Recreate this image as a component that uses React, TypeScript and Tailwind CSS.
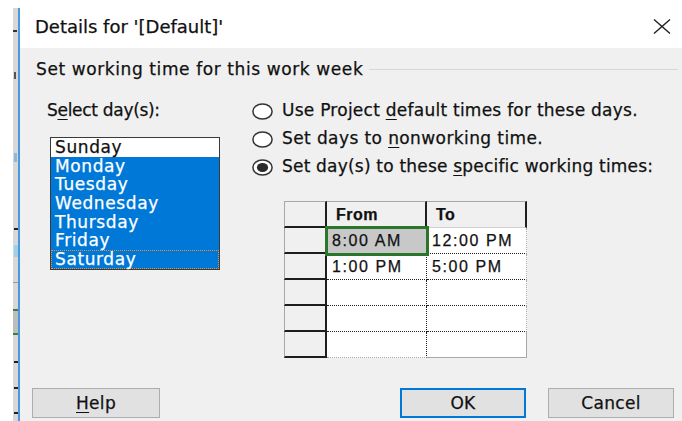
import React from "react";

const DAYS = ["Sunday", "Monday", "Tuesday", "Wednesday", "Thursday", "Friday", "Saturday"];

function Radio({ checked }: { checked?: boolean }) {
  return (
    <svg width="21" height="17" viewBox="0 0 21 17" className="shrink-0">
      <ellipse cx="10.5" cy="8.5" rx="9.6" ry="7.6" fill="#fff" stroke="#333" strokeWidth="1.5" />
      {checked && <ellipse cx="10.5" cy="8.5" rx="5.6" ry="4.5" fill="#2b2b2b" />}
    </svg>
  );
}

function BackStrip() {
  // Sliver of the window that sits behind the dialog
  return (
    <div className="w-[5px] bg-[#d8d8d8] relative shrink-0">
      <span className="absolute left-0 top-[14px] w-[4px] h-[10px] border-b-2 border-[#333]" />
      <span className="absolute left-[1px] top-[64px] w-[3px] h-[7px] border-l-2 border-[#555]" />
      <span className="absolute left-[1px] top-[145px] w-[3px] h-[9px] bg-[#8fb7d6]" />
      <span className="absolute left-[1px] top-[220px] w-[4px] h-[2px] bg-[#222]" />
      <span className="absolute left-[1px] top-[237px] w-[4px] h-[12px] bg-[#9fd0e6]" />
      <span className="absolute left-0 top-[274px] w-[5px] h-[1px] bg-[#999]" />
      <span className="absolute left-0 top-[301px] w-[5px] h-[26px] bg-[#bdbdbd] border-y-2 border-[#3d7d3d]" />
      <span className="absolute left-[1px] top-[353px] w-[4px] h-[2px] bg-[#222]" />
      <span className="absolute left-[1px] top-[379px] w-[4px] h-[2px] bg-[#222]" />
      <span className="absolute left-[1px] top-[404px] w-[4px] h-[2px] bg-[#222]" />
    </div>
  );
}

function HeaderCell({ children }: { children?: React.ReactNode }) {
  return (
    <div className="h-[27px] bg-[#f0f0f0] border-t border-[#a8a8a8] border-b border-b-[#d0d0d0] border-r-2 border-r-[#1e1e1e] flex items-center pl-[9px] font-['Liberation_Sans',sans-serif] font-bold text-[16px] tracking-[0.5px] text-[#111]">
      {children}
    </div>
  );
}

function RowHead({ first }: { first?: boolean }) {
  return (
    <div
      className={`bg-[#f0f0f0] border-l border-[#a8a8a8] border-r-2 border-r-[#1e1e1e] border-b-2 border-b-[#1e1e1e] ${
        first ? "h-[27px] border-t border-t-[#a8a8a8]" : "h-[26px]"
      }`}
    />
  );
}

function TimeTable() {
  const rows: [string, string][] = [
    ["8:00 AM", "12:00 PM"],
    ["1:00 PM", "5:00 PM"],
    ["", ""],
    ["", ""],
    ["", ""],
  ];
  const cellText = "font-['Liberation_Sans',sans-serif] text-[16px] tracking-[1.6px] text-[#111]";
  return (
    <div className="grid grid-cols-[43px_100px_100px] w-[243px]">
      <RowHead first />
      <HeaderCell>From</HeaderCell>
      <HeaderCell>To</HeaderCell>
      {rows.map(([from, to], i) => {
        const last = i === rows.length - 1;
        const bottom = last ? "border-b border-[#a8a8a8]" : "border-b border-dotted border-[#1a1a1a]";
        return (
          <React.Fragment key={i}>
            <RowHead />
            <div
              className={`h-[26px] border-r border-dotted border-r-[#1a1a1a] ${bottom} flex items-center pl-[5px] ${cellText} ${
                i === 0 ? "relative z-10 bg-[#c8c8c8] outline-solid outline-[3px] outline-[#2a762a] -outline-offset-1" : "bg-white"
              }`}
            >
              {from}
            </div>
            <div
              className={`h-[26px] bg-white border-r border-r-[#a8a8a8] ${bottom} flex items-center pl-[5px] ${cellText}`}
            >
              {to}
            </div>
          </React.Fragment>
        );
      })}
    </div>
  );
}

function Button({
  children,
  primary,
  className = "",
}: {
  children: React.ReactNode;
  primary?: boolean;
  className?: string;
}) {
  return (
    <div
      className={`h-[30px] bg-[#e1e1e1] flex items-center justify-center text-[17px] tracking-[0.3px] pt-[1px] ${
        primary ? "border-2 border-[#0078d7]" : "border border-[#adadad]"
      } ${className}`}
    >
      {children}
    </div>
  );
}

export default function App() {
  return (
    <div className="w-[682px] h-[421px] bg-white overflow-hidden flex flex-col font-['DejaVu_Sans',sans-serif] text-[#111] [-webkit-text-stroke:0.25px]">
      <div className="h-[8px] shrink-0" />
      <div className="flex flex-1 min-h-0">
        <div className="w-[13px] bg-white shrink-0" />
        <BackStrip />
        <div className="w-[2px] bg-[#4a98de] shrink-0" />

        <div className="flex-1 flex flex-col min-w-0">
          {/* title bar */}
          <div className="h-[40px] bg-white flex items-center pl-[15px] pr-[11px] shrink-0">
            <span className="text-[18px] leading-none mb-[2px]">Details for '[Default]'</span>
            <svg width="18" height="15" viewBox="0 0 18 15" className="ml-auto mb-[3px]">
              <path d="M1 0.5 L17 14.5 M17 0.5 L1 14.5" stroke="#222" strokeWidth="1.4" fill="none" />
            </svg>
          </div>

          {/* body */}
          <div className="flex-1 bg-[#f0f0f0] flex flex-col">
            <div className="mt-[11px] h-[20px] pl-[16px] pr-[4px] flex items-center">
              <span className="text-[17px] leading-[20px] tracking-[0.6px] whitespace-nowrap">
                Set working time for this work week
              </span>
              <div className="flex-1 h-px bg-[#d8d8d8] ml-[6px]" />
            </div>

            <div className="flex pl-[27px]">
              <div className="w-[173px] flex flex-col shrink-0">
                <div className="mt-[21px] h-[20px] leading-[20px] text-[17px] tracking-[-0.3px] whitespace-nowrap">
                  S<span className="underline underline-offset-[3px]">e</span>lect day(s):
                </div>
                <div className="ml-[3px] mt-[17px] w-[170px] border border-[#3a3a3a] bg-white">
                  {DAYS.map((d, i) => (
                    <div
                      key={d}
                      className={`h-[18.7px] text-[17px] tracking-[0.6px] ${
                        i === 0 ? "bg-white text-[#111]" : "bg-[#0078d7] text-white"
                      } ${
                        i === 6
                          ? "border border-dotted border-[#f0902a] pl-[3px] leading-[16.7px]"
                          : "pl-[4px] leading-[18.7px]"
                      }`}
                    >
                      {d}
                    </div>
                  ))}
                </div>
              </div>

              <div className="ml-[32px] flex flex-col">
                <div className="mt-[18px] flex flex-col">
                  <div className="h-[28px] flex items-center gap-[9px]">
                    <Radio />
                    <span className="text-[17px] tracking-[0.25px] whitespace-nowrap">
                      Use Project <span className="underline underline-offset-[3px]">d</span>efault times for these days.
                    </span>
                  </div>
                  <div className="h-[28px] flex items-center gap-[9px]">
                    <Radio />
                    <span className="text-[17px] tracking-[0.4px] whitespace-nowrap">
                      Set days to <span className="underline underline-offset-[3px]">n</span>onworking time.
                    </span>
                  </div>
                  <div className="h-[28px] flex items-center gap-[9px]">
                    <Radio checked />
                    <span className="text-[17px] tracking-[0.2px] whitespace-nowrap">
                      Set day(s) to these <span className="underline underline-offset-[3px]">s</span>pecific working times:
                    </span>
                  </div>
                </div>
                <div className="ml-[32px] mt-[20px]">
                  <TimeTable />
                </div>
              </div>
            </div>

            <div className="mt-auto mb-[3px] flex pl-[12px] pr-[8px]">
              <Button className="w-[128px]">
                <span>
                  <span className="underline underline-offset-[3px]">H</span>elp
                </span>
              </Button>
              <div className="flex-1" />
              <Button primary className="w-[126px]">
                OK
              </Button>
              <Button className="w-[126px] ml-[22px]">Cancel</Button>
            </div>
          </div>
        </div>
      </div>
    </div>
  );
}
